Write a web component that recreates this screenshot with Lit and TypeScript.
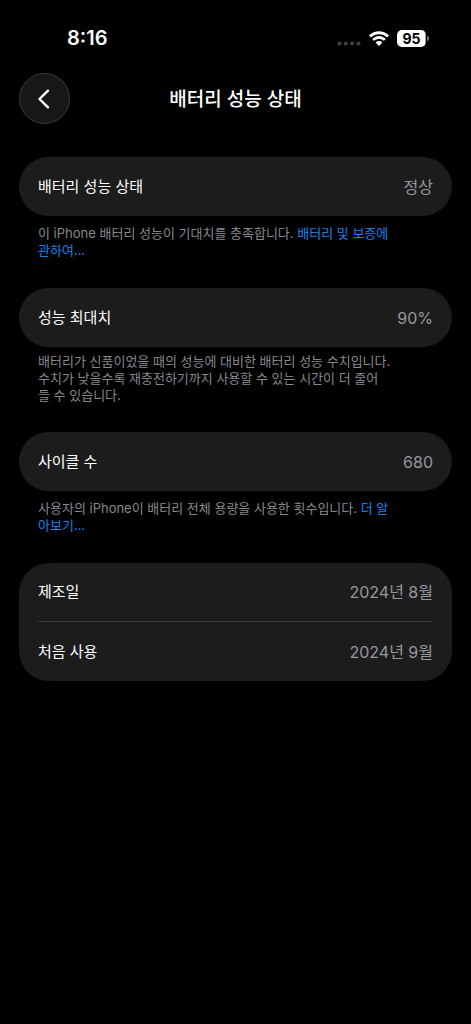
import { LitElement, html, css, nothing, TemplateResult } from "lit";
import { customElement, property } from "lit/decorators.js";

@customElement("status-bar")
class StatusBar extends LitElement {
  static styles = css`
    :host {
      display: flex;
      align-items: center;
      justify-content: space-between;
      height: 24px;
      padding: 26px 42px 0 67px;
      color: #fff;
    }
    .time {
      font-size: 20px;
      line-height: 24px;
      font-weight: 600;
    }
    .icons {
      display: flex;
      align-items: center;
      gap: 8px;
    }
    svg {
      display: block;
    }
    .dots {
      margin-top: 10px;
    }
    .battery {
      display: flex;
      align-items: center;
      gap: 1px;
    }
    .level {
      display: flex;
      align-items: center;
      justify-content: center;
      width: 29px;
      height: 17px;
      border-radius: 5px;
      background: linear-gradient(to right, #fff 95%, #a0a0a0 95%);
      color: #000;
      font-size: 14px;
      line-height: 17px;
      font-weight: 700;
    }
    .tip {
      width: 2px;
      height: 5px;
      border-radius: 0 2px 2px 0;
      background: #77777a;
    }
  `;

  render() {
    return html`
      <span class="time">8:16</span>
      <div class="icons">
        <svg class="dots" width="24" height="5" viewBox="0 0 24 5" fill="#404042" aria-hidden="true">
          <circle cx="2.5" cy="2.5" r="2.1" />
          <circle cx="8.8" cy="2.5" r="2.1" />
          <circle cx="15.1" cy="2.5" r="2.1" />
          <circle cx="21.4" cy="2.5" r="2.1" />
        </svg>
        <svg width="20" height="15" viewBox="0 0 20 15" fill="#fff" aria-hidden="true">
          <path d="M10 0.2C6.300 0.200 2.900 1.600 0.400 4C0.100 4.300 0.100 4.600 0.400 4.900L1.500 6.100C1.800 6.400 2.100 6.400 2.400 6.100C4.400 4.200 7 3.200 10 3.200S15.600 4.200 17.600 6.100C17.900 6.400 18.200 6.400 18.500 6.100L19.600 4.900C19.900 4.600 19.900 4.300 19.600 4C17.100 1.600 13.700 0.200 10 0.200Z" />
          <path d="M10 5.100C7.600 5.100 5.400 6 3.700 7.500C3.400 7.800 3.400 8.100 3.700 8.400L4.800 9.600C5.100 9.900 5.400 9.800 5.700 9.600C6.900 8.600 8.300 8.100 10 8.100S13.100 8.600 14.300 9.600C14.600 9.800 14.900 9.900 15.200 9.600L16.300 8.400C16.600 8.100 16.600 7.800 16.300 7.500C14.600 6 12.400 5.100 10 5.100Z" />
          <path d="M10 10C8.800 10 7.800 10.400 7 11C6.700 11.300 6.700 11.600 7 11.900L9.500 14.400C9.800 14.700 10.200 14.700 10.500 14.400L13 11.900C13.300 11.600 13.300 11.300 13 11C12.200 10.400 11.200 10 10 10Z" />
        </svg>
        <div class="battery">
          <span class="level">95</span>
          <span class="tip"></span>
        </div>
      </div>
    `;
  }
}

interface Row {
  label: string;
  value: string;
}

@customElement("settings-group")
class SettingsGroup extends LitElement {
  @property({ attribute: false }) rows: Row[] = [];
  @property({ attribute: false }) note: TemplateResult | null = null;
  @property({ type: Boolean, reflect: true }) tight = false;

  static styles = css`
    :host {
      display: block;
    }
    .card {
      margin: 0;
      padding: 0 19px;
      border-radius: 30px;
      background: #1c1c1d;
    }
    .row {
      display: flex;
      align-items: center;
      justify-content: space-between;
      box-sizing: border-box;
      height: 59px;
      line-height: 24px;
    }
    .row:not(:last-child) {
      border-bottom: 1px solid #39393b;
    }
    dt {
      color: #fff;
      font-size: 15px;
    }
    dd {
      margin: 0;
      color: #97979d;
      font-size: 16px;
    }
    .note {
      margin: 0;
      padding: 9px 19px 1px;
      color: #88888d;
      font-size: 13px;
      line-height: 17px;
    }
    :host([tight]) .note {
      padding: 6px 19px 0;
    }
    a {
      color: #1a80e6;
      text-decoration: none;
    }
  `;

  render() {
    return html`
      <dl class="card">
        ${this.rows.map(
          (r) => html`<div class="row"><dt>${r.label}</dt><dd>${r.value}</dd></div>`
        )}
      </dl>
      ${this.note ? html`<p class="note">${this.note}</p>` : nothing}
    `;
  }
}

@customElement("app-root")
class AppRoot extends LitElement {
  static styles = css`
    :host {
      display: block;
      min-height: 100vh;
      background: #000;
      color: #fff;
      font-family: Inter, "Noto Sans CJK KR", sans-serif;
    }
    header {
      display: grid;
      grid-template-columns: 51px 1fr 51px;
      align-items: center;
      padding: 23px 19px 0;
    }
    .back {
      display: flex;
      align-items: center;
      justify-content: center;
      width: 51px;
      height: 51px;
      padding: 0 2px 0 0;
      border: 1px solid #3b3b3c;
      border-radius: 50%;
      background: #171718;
      color: #fff;
    }
    h1 {
      margin: 0;
      padding-top: 3px;
      text-align: center;
      font-size: 19px;
      line-height: 28px;
      font-weight: 500;
    }
    main {
      display: flex;
      flex-direction: column;
      gap: 28px;
      padding: 33px 19px;
    }
  `;

  render() {
    return html`
      <status-bar></status-bar>
      <header>
        <button class="back" aria-label="뒤로">
          <svg width="14" height="22" viewBox="0 0 14 22" fill="none" stroke="currentColor" stroke-width="2.4" stroke-linecap="round" stroke-linejoin="round" aria-hidden="true">
            <path d="M11 2.700L2.500 11L11 19.300" />
          </svg>
        </button>
        <h1>배터리 성능 상태</h1>
      </header>
      <main>
        <settings-group
          .rows=${[{ label: "배터리 성능 상태", value: "정상" }]}
          .note=${html`이 iPhone 배터리 성능이 기대치를 충족합니다. <a href="#warranty">배터리 및 보증에<br />관하여...</a>`}
        ></settings-group>
        <settings-group
          tight
          .rows=${[{ label: "성능 최대치", value: "90%" }]}
          .note=${html`배터리가 신품이었을 때의 성능에 대비한 배터리 성능 수치입니다.<br />수치가 낮을수록 재충전하기까지 사용할 수 있는 시간이 더 줄어<br />들 수 있습니다.`}
        ></settings-group>
        <settings-group
          .rows=${[{ label: "사이클 수", value: "680" }]}
          .note=${html`사용자의 iPhone이 배터리 전체 용량을 사용한 횟수입니다. <a href="#cycles">더 알<br />아보기...</a>`}
        ></settings-group>
        <settings-group
          .rows=${[
            { label: "제조일", value: "2024년 8월" },
            { label: "처음 사용", value: "2024년 9월" },
          ]}
        ></settings-group>
      </main>
    `;
  }
}
